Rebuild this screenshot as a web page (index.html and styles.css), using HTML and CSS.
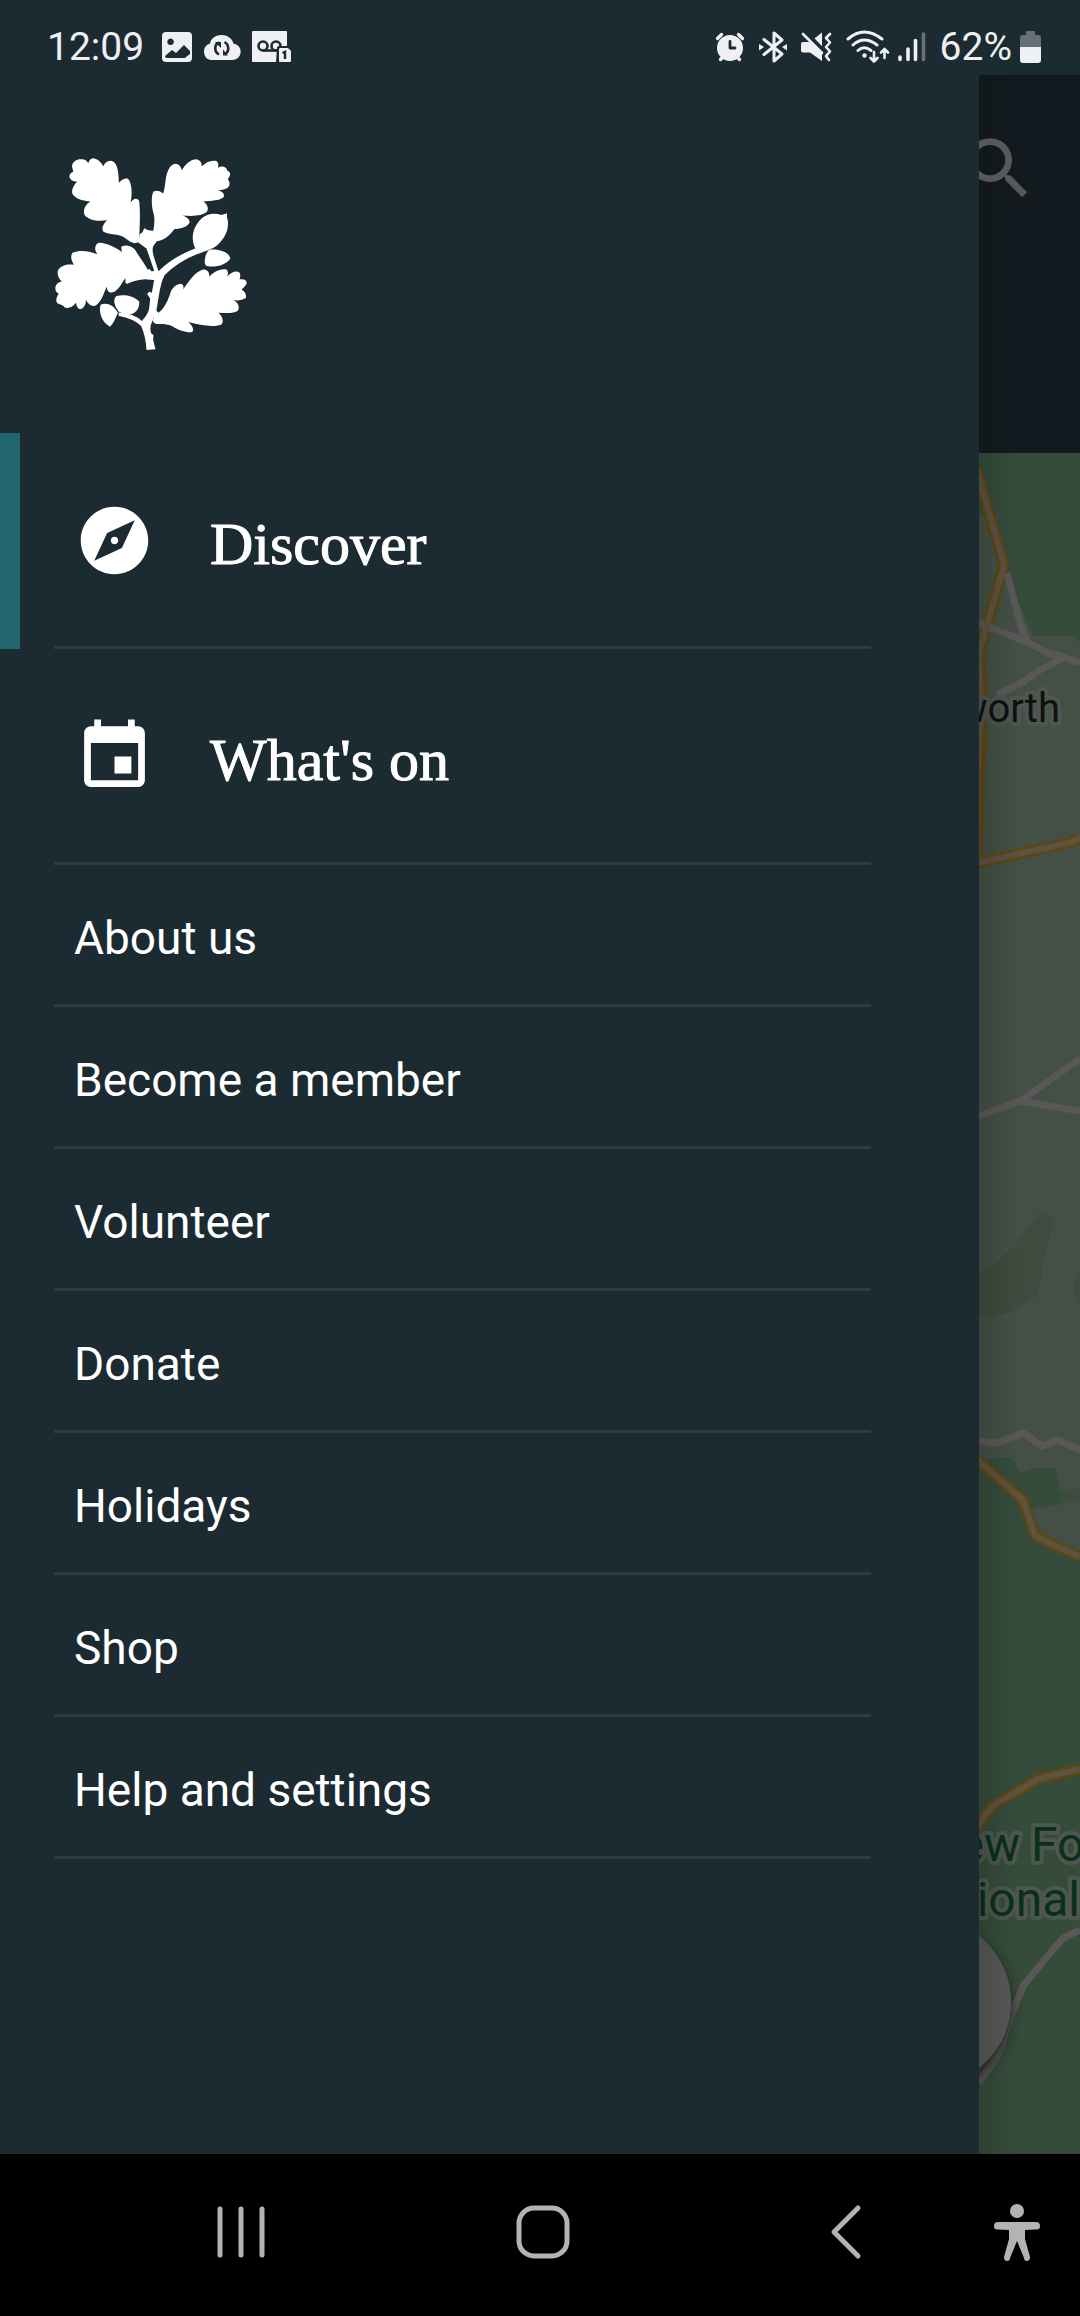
FILE: index.html
```html
<!DOCTYPE html>
<html lang="en">
<head>
<meta charset="utf-8">
<meta name="viewport" content="width=device-width, initial-scale=1">
<title>Menu</title>
<link rel="stylesheet" href="styles.css">
</head>
<body>
<header class="status">
  <span class="status-text">12:09</span>
  <div class="status-left">
    <svg width="32" height="34" viewBox="0 0 32 34" fill="#eff0f3"><path fill-rule="evenodd" d="M5 2h22a4 4 0 0 1 4 4v22a4 4 0 0 1-4 4H5a4 4 0 0 1-4-4V6a4 4 0 0 1 4-4zM9.500 8.500a3.300 3.300 0 1 0 .1 0zM4 26l7-6 4 3 8-8 6 6v3L25 27q0 1-2 1H6q-2 0-2-2z"/></svg>
    <svg width="40" height="34" viewBox="0 0 40 34"><path fill="#eff0f3" d="M9 30a8.500 8.500 0 0 1-1-16.500C9 8 14 5 19.500 5S30 8 31.500 13.500A8.300 8.300 0 0 1 31 30z"/><path fill="none" stroke="#1c2b32" stroke-width="2.600" d="M17 12.500c-5 2-5 9 0 12M22.500 24c5-2 5-9 0-12"/><path fill="#1c2b32" d="M13 12h6v6zM21 25.500v-6l5 6z"/></svg>
    <svg width="40" height="34" viewBox="0 0 40 34"><path fill="#eff0f3" d="M2 1h33q1 0 1 1v14h-8q-2 0-2 2v14H2q-1 0-1-1V2q0-1 1-1z"/><g fill="none" stroke="#1c2b32" stroke-width="2.600"><circle cx="12" cy="16" r="4.500"/><circle cx="25" cy="16" r="4.500"/><path d="M12 20.500h14"/></g><path fill="#1c2b32" d="M26 17h11v16H25z"/><path fill="#eff0f3" d="M29 18h8l3 3v10q0 1-1 1H29q-1 0-1-1V19q0-1 1-1z"/><path fill="none" stroke="#1c2b32" stroke-width="2.400" d="M31.500 23l2.500-1.200V29"/></svg>
  </div>
  <div class="status-right">
    <svg width="30" height="34" viewBox="0 0 30 34"><g stroke="#eff0f3" stroke-width="3.400" stroke-linecap="round"><path d="M2.500 8.500l4-4M27.500 8.500l-4-4M5.500 29.500l3-3M24.500 29.500l-3-3"/></g><circle cx="15" cy="18" r="13" fill="#eff0f3"/><path fill="none" stroke="#1c2b32" stroke-width="2.800" stroke-linecap="round" stroke-linejoin="round" d="M15 11.500V18h5"/></svg>
    <svg width="28" height="34" viewBox="0 0 28 34"><path fill="none" stroke="#eff0f3" stroke-width="3" stroke-linecap="round" stroke-linejoin="round" d="M5 9.500L23 24l-8 7V3l8 7L5 24.500"/><path fill="#eff0f3" d="M0 14l5 3-5 3.500zM28 14l-5 3 5 3.500z"/></svg>
    <svg width="31" height="34" viewBox="0 0 31 34"><path fill="#eff0f3" d="M2 12h7L21 2.500V31L9 22.500H2q-2 0-2-2V14q0-2 2-2z"/><path stroke="#1c2b32" stroke-width="5" d="M3 1l21 22"/><path fill="none" stroke="#eff0f3" stroke-width="2.600" stroke-linecap="round" stroke-linejoin="round" d="M2 4l19 19M29 4l-4 4 4 4.500-4 4.500 4 4.500-4 4.500 3 4"/></svg>
    <svg width="44" height="34" viewBox="0 0 44 34"><g fill="none" stroke="#eff0f3" stroke-width="3" stroke-linecap="round"><path d="M2 9Q18-5 36 9M7 15Q18 5 31 15M12 20.500Q18 15 25 20.500"/><path stroke-width="2.600" stroke-linejoin="round" d="M28 22v9.500M24.500 28l3.500 3.500 3.500-3.500M38.500 28V19M35 22.500l3.500-3.500 3.500 3.500"/></g><circle cx="18.500" cy="25.500" r="2.200" fill="#eff0f3"/></svg>
    <svg width="28" height="34" viewBox="0 0 28 34"><g stroke="#eff0f3" stroke-width="3.600" stroke-linecap="round"><path d="M2 27v2.500M10 19v10.500M17.500 10.500v19"/><path stroke="#667078" d="M25.500 4v25.500"/></g></svg>
    <span class="status-text">62%</span>
    <svg width="21" height="34" viewBox="0 0 21 34"><path fill="#667078" d="M7 1h7q1 0 1 1v3h3q3 0 3 3v9H0V8q0-3 3-3h3V2q0-1 1-1z"/><path fill="#eff0f3" d="M0 17h21v13q0 3-3 3H3q-3 0-3-3z"/></svg>
  </div>
</header>

<main class="screen">
  <aside class="drawer">
    <svg class="logo" viewBox="42 48 580 584" fill="#fff" role="img" aria-label="Oak leaf logo">
      <path d="M298 290C300 250 302 215 298 182C292 172 280 174 272 188C278 160 276 125 264 115C252 112 242 122 237 128C236 100 234 75 222 65C210 56 196 64 190 78C184 66 172 54 158 54C150 56 148 62 145 68C138 58 132 56 124 57C112 56 98 62 96 78L100 94C90 98 86 106 90 114C94 122 104 124 112 124C104 132 94 146 97 160C104 174 124 182 152 184C136 192 128 210 134 224C146 240 172 244 202 240C190 250 184 264 190 274C204 284 230 280 250 290C262 298 272 308 284 309L297 306Z"/>
      <path d="M340 275C344 250 346 235 340 215C335 195 334 165 341 154C350 148 362 152 370 160C374 150 376 130 378 115C382 90 392 72 406 70C418 70 424 80 426 90C436 74 450 58 470 57C482 60 486 68 486 78C498 66 514 58 530 62C536 66 537 74 535 82C546 76 560 78 562 90L571 97C572 106 568 112 564 116C570 124 572 134 566 140C558 148 546 148 536 150C548 154 556 162 552 170C540 182 515 180 490 184C502 190 508 204 502 214C488 228 460 228 428 226C440 230 452 238 449 248C440 262 418 266 404 266C390 284 376 300 350 303Z"/>
      <path d="M299 282L308 276L313 264L325 270L340 272L352 302L340 318Q336 330 342 350L356 393Q400 350 466 325L510 328L480 339Q420 360 374 405Q364 425 360 450L350 510L333 555Q330 570 334 580L341 586L340 600L347 628L320 630Q318 590 304 558Q280 535 236 527L236 517Q285 520 306 543Q326 520 328 505L331 475L322 462L328 455L336 458L343 420L322 418L322 392L328 386L336 394L343 392L320 325L296 308Z"/>
      <path d="M468 328C454 300 456 270 476 245C494 222 520 216 545 224L562 219L562 232C570 256 562 285 540 308C530 320 515 328 500 331Z"/>
      <path d="M510 328C540 326 566 335 572 354C560 374 530 382 504 378C492 376 494 360 498 345C502 336 506 330 510 328Z"/>
      <path d="M325 390C312 368 295 345 285 328C272 316 258 312 244 320L246 336C236 326 200 308 178 308C164 312 162 328 172 342C150 332 118 328 98 338C90 348 94 362 102 374C84 370 62 376 54 390C50 406 58 418 66 424C50 426 42 440 48 454L56 462C48 472 46 486 54 490C62 494 70 494 74 502C84 506 98 502 108 488C110 500 114 508 124 507C134 502 138 492 138 480C146 496 158 500 168 496C184 484 190 465 200 440C202 456 210 460 222 456C236 448 244 434 256 414C258 424 254 430 262 431C280 424 300 416 325 418Z"/>
      <path d="M350 552C338 548 336 540 342 532L340 516L348 510L356 518C375 505 385 480 394 452C402 438 415 430 426 432C432 436 432 442 430 448C446 425 465 395 490 388C505 388 510 398 508 410C522 394 545 384 560 388C566 394 566 402 562 410C574 396 590 390 600 398C604 406 600 414 600 418C616 414 624 424 620 432C616 440 610 444 606 448C616 454 622 466 618 474C608 482 590 482 580 480C594 486 602 500 594 512C580 522 556 518 536 518C548 528 554 546 544 554C520 562 480 556 446 546C456 556 464 566 458 575C446 580 420 572 400 560C385 552 370 552 350 552Z"/>
      <path d="M236 514C220 494 220 474 230 468C250 462 280 466 298 484C300 504 290 520 262 526Z"/>
      <path d="M234 518C222 496 200 486 182 494C176 515 184 545 210 560C222 550 228 530 234 518Z"/>
    </svg>
    <nav>
      <ul class="menu">
        <li class="item item-main is-current"><a href="#discover"><svg class="icon" viewBox="0 0 24 24"><path d="M12 10.900c-.61 0-1.100.49-1.100 1.100s.49 1.100 1.100 1.100 1.100-.49 1.100-1.100-.49-1.100-1.100-1.100zM12 2C6.480 2 2 6.480 2 12s4.480 10 10 10 10-4.480 10-10S17.520 2 12 2zm2.190 12.190L6 18l3.810-8.190L18 6l-3.810 8.190z"/></svg><span>Discover</span></a></li>
        <li class="item item-main"><a href="#whats-on"><svg class="icon" viewBox="0 0 24 24"><path d="M17 12h-5v5h5v-5zM16 1v2H8V1H6v2H5c-1.110 0-1.990.9-1.990 2L3 19c0 1.100.89 2 2 2h14c1.100 0 2-.9 2-2V5c0-1.100-.9-2-2-2h-1V1h-2zm3 18H5V8h14v11z"/></svg><span>What's on</span></a></li>
        <li class="item"><a href="#about">About us</a></li>
        <li class="item"><a href="#member">Become a member</a></li>
        <li class="item"><a href="#volunteer">Volunteer</a></li>
        <li class="item"><a href="#donate">Donate</a></li>
        <li class="item"><a href="#holidays">Holidays</a></li>
        <li class="item"><a href="#shop">Shop</a></li>
        <li class="item"><a href="#help">Help and settings</a></li>
      </ul>
    </nav>
  </aside>

  <section class="page">
    <div class="page-bar">
      <button class="search" type="button" aria-label="Search"><svg class="icon" viewBox="0 0 24 24"><path d="M15.500 14h-.79l-.28-.27A6.471 6.471 0 0 0 16 9.500 6.500 6.500 0 1 0 9.500 16c1.610 0 3.090-.59 4.230-1.570l.27.28v.79l5 4.990L20.490 19l-4.990-5zm-6 0C7.010 14 5 11.990 5 9.500S7.010 5 9.500 5 14 7.010 14 9.500 11.990 14 9.500 14z"/></svg></button>
    </div>
    <div class="map">
      <svg class="map-art" viewBox="0 0 101 1701" preserveAspectRatio="xMinYMin slice">
        <defs>
          <linearGradient id="edge"><stop offset="0" stop-color="#000" stop-opacity=".14"/><stop offset="1" stop-color="#000" stop-opacity="0"/></linearGradient>
          <filter id="soft" x="-30%" y="-30%" width="160%" height="160%"><feGaussianBlur stdDeviation="5"/></filter>
        </defs>
        <path fill="#445046" d="M0 0h101v1701H0z"/>
        <g fill="#354c3b">
          <path d="M0 0h101v190L94 183H54L42 155L28 120L18 62H0z"/>
          <path d="M0 1008L24 1004L33 1006L42 1020L53 1015H77L83 1051L54 1056L59 1085L101 1104V1701H0z"/>
        </g>
        <g fill="#3d4c3f">
          <path d="M0 818L13 814L34 794L61 759L77 765L67 794L59 841L34 859L0 865z"/>
          <path d="M101 823L94 829L96 843L101 851zM81 1038L101 1034V1047L83 1051z"/>
        </g>
        <g class="road-edge">
          <path d="M-3 15L25 112L0 200L4 254L0 330L-2 410L93 389L101 385"/>
          <path d="M-4 1005L44 1047L56 1083L101 1104"/>
          <path d="M-4 1376L13 1353L59 1326L101 1316"/>
        </g>
        <g class="lane">
          <path d="M0 170L48 189L69 200L84 204L101 210M28 120L41 170L48 189M18 242L44 229L61 217L84 205"/>
          <path d="M0 663L41 648L98 608L101 606M41 648L101 658"/>
          <path d="M0 988L18 990L44 980L63 993L79 987L101 997"/>
          <path d="M101 1477L84 1485L68 1504L44 1533L34 1558L20 1600L0 1630"/>
        </g>
        <g class="road">
          <path d="M-3 15L25 112L0 200L2 254L-2 330L-2 410L93 389L101 385"/>
          <path d="M-4 1005L44 1047L56 1083L101 1104"/>
          <path d="M-4 1376L13 1353L59 1326L101 1316"/>
        </g>
        <circle cx="-50" cy="1554" r="85" fill="#1a2018" opacity=".6" filter="url(#soft)"/>
        <circle cx="-52" cy="1549" r="84" fill="#585858"/>
        <text class="place" x="81" y="269" text-anchor="end">worth</text>
        <text class="park" y="1408"><tspan text-anchor="end" x="41">ew</tspan><tspan text-anchor="start" x="52">Fo</tspan></text>
        <text class="park" x="101" y="1463" text-anchor="end">ional</text>
        <path fill="url(#edge)" d="M0 0h40v1701H0z"/>
      </svg>
    </div>
  </section>
</main>

<footer class="system">
  <button type="button" aria-label="Recent apps"><svg width="56" height="56" viewBox="0 0 56 56"><path d="M7 5v46M28 5v46M49 5v46"/></svg></button>
  <button type="button" aria-label="Home"><svg width="56" height="56" viewBox="0 0 56 56"><rect x="5" y="4" width="48" height="48" rx="15"/></svg></button>
  <button type="button" aria-label="Back"><svg width="56" height="56" viewBox="0 0 56 56"><path d="M43 4L19 28L43 52"/></svg></button>
  <button type="button" aria-label="Accessibility"><svg class="person" width="46" height="60" viewBox="0 0 46 60"><circle cx="23" cy="9" r="7"/><path d="M4 20h38q4 0 4 4t-4 3.500L31 28v9l5 18q0 4-3 4t-3-3l-7-17-7 17q0 3-3 3t-3-4l5-18v-9L4 27.500Q0 28 0 24t4-4z"/></svg></button>
</footer>
</body>
</html>
```
FILE: styles.css
```css
* {
  box-sizing: border-box;
}

body {
  margin: 0;
  min-height: 100vh;
  display: flex;
  flex-direction: column;
  background: #1c2b32;
  color: #fff;
  font-family: Roboto, "Noto Sans", sans-serif;
}

svg {
  display: block;
  flex: none;
}

button {
  border: 0;
  padding: 0;
  background: none;
}

/* Status bar */
.status {
  display: flex;
  align-items: center;
  height: 75px;
  padding: 19px 39px 0 47px;
}

.status-text {
  color: #eff0f3;
  font-size: 39px;
  line-height: 46px;
}

.status-left {
  display: flex;
  gap: 9px;
  margin-left: 17px;
}

.status-right {
  display: flex;
  align-items: center;
  gap: 14px;
  margin-left: auto;
}

.status-right svg:nth-of-type(5) {
  margin-left: -6px;
}

.status-right svg:nth-of-type(6) {
  margin-left: -6px;
}

/* Drawer beside the dimmed page */
.screen {
  flex: 1;
  display: grid;
  grid-template-columns: 1fr 101px;
}

.drawer {
  padding-top: 81px;
}

.logo {
  width: 193px;
  height: 195px;
  margin: 0 0 82px 54px;
}

.menu {
  margin: 0;
  padding: 0;
  list-style: none;
}

.item {
  padding: 0 108px 0 34px;
  border-left: 20px solid transparent;
}

.item a {
  display: flex;
  align-items: center;
  height: 142px;
  padding: 6px 20px 0;
  border-bottom: 3px solid #2d3b43;
  color: #fff;
  font-size: 46px;
  line-height: 54px;
  text-decoration: none;
}

.item-main a {
  height: 216px;
  padding-top: 2px;
  gap: 55px;
  font-family: "Liberation Serif", serif;
  font-size: 60px;
  line-height: 68px;
  -webkit-text-stroke: 1px #fff;
}

.item-main span {
  padding-top: 6px;
}

.is-current {
  border-left-color: #21666e;
}

.icon {
  width: 81px;
  height: 81px;
  fill: #fff;
  stroke: none;
}

/* Page behind the drawer */
.page {
  display: flex;
  flex-direction: column;
  overflow: hidden;
}

.page-bar {
  height: 378px;
  padding-top: 53px;
  background: linear-gradient(90deg, #10181b, #121a20 40px);
}

.search {
  display: block;
  margin-left: -21px;
}

.search .icon {
  fill: #585858;
}

.map {
  flex: 1;
  display: flex;
  background: #354c3b;
}

.map-art {
  width: 100%;
}

.lane {
  fill: none;
  stroke: #5a5759;
  stroke-width: 7px;
  stroke-linejoin: round;
}

.road-edge {
  fill: none;
  stroke: #5e4610;
  stroke-width: 11px;
  stroke-linejoin: round;
}

.road {
  fill: none;
  stroke: #5e5341;
  stroke-width: 6px;
  stroke-linejoin: round;
}

.place,
.park {
  paint-order: stroke;
  stroke: #4f5650;
  stroke-width: 8px;
  stroke-linejoin: round;
}

.place {
  fill: #0e1112;
  font-size: 40px;
}

.park {
  fill: #0a3018;
  font-size: 48px;
}

/* System navigation */
.system {
  display: grid;
  grid-template-columns: 1fr 1fr 1fr 46px;
  align-items: center;
  height: 162px;
  padding: 0 40px 6px 90px;
  background: #000;
}

.system button {
  display: flex;
  justify-content: center;
}

.system svg {
  fill: none;
  stroke: #b3b3b3;
  stroke-width: 5px;
  stroke-linecap: round;
  stroke-linejoin: round;
}

.system .person {
  fill: #b3b3b3;
  stroke: none;
}
```
